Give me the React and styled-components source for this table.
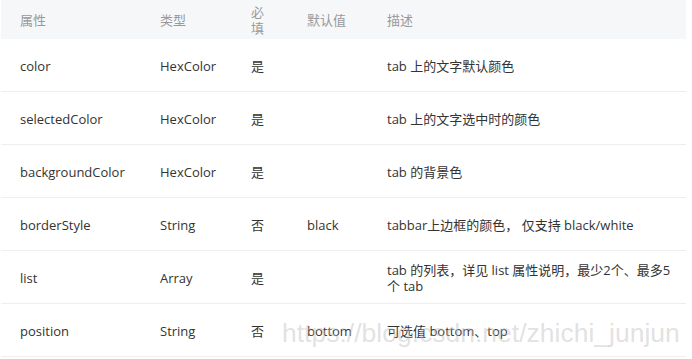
import styled, { createGlobalStyle } from "styled-components";

const Global = createGlobalStyle`
  body {
    margin: 0;
    background: #fff;
    font-family: "Open Sans", "Noto Sans CJK SC", sans-serif;
  }
`;

const Page = styled.div`
  position: relative;
  width: 692px;
  height: 359px;
  overflow: hidden;
  background: #fff;
`;

const Table = styled.div`
  width: 685px;
  margin-left: 1px;
  font-size: 13px;
  color: #333;
`;

const Row = styled.div`
  display: grid;
  grid-template-columns: 140px 91px 56px 80px 1fr;
  align-items: center;
  min-height: ${(p) => (p.head ? "39px" : "52px")};
  background: ${(p) => (p.head ? "#f6f7f9" : "#fff")};
  color: ${(p) => (p.head ? "#999" : "#333")};
  border-bottom: ${(p) => (p.head ? "none" : "1px solid #eceef1")};
`;

const Cell = styled.div`
  padding: 1px ${(p) => (p.wide ? "6px" : "19px")} 0 19px;
  line-height: 16px;
`;

const Watermark = styled.div`
  position: absolute;
  left: 282px;
  top: 318px;
  font-family: "Liberation Sans", Arial, sans-serif;
  font-size: 26.5px;
  color: rgba(190, 190, 190, 0.45);
  white-space: nowrap;
  pointer-events: none;
`;

const rows = [
  ["color", "HexColor", "是", "", "tab 上的文字默认颜色"],
  ["selectedColor", "HexColor", "是", "", "tab 上的文字选中时的颜色"],
  ["backgroundColor", "HexColor", "是", "", "tab 的背景色"],
  ["borderStyle", "String", "否", "black", "tabbar上边框的颜色， 仅支持 black/white"],
  ["list", "Array", "是", "", "tab 的列表，详见 list 属性说明，最少2个、最多5个 tab"],
  ["position", "String", "否", "bottom", "可选值 bottom、top"],
];

export default function App() {
  return (
    <Page>
      <Global />
      <Table>
        <Row head>
          <Cell>属性</Cell>
          <Cell>类型</Cell>
          <Cell>必填</Cell>
          <Cell>默认值</Cell>
          <Cell wide>描述</Cell>
        </Row>
        {rows.map((r) => (
          <Row key={r[0]}>
            {r.map((c, i) => (
              <Cell key={i} wide={i === 4}>
                {c}
              </Cell>
            ))}
          </Row>
        ))}
      </Table>
      <Watermark>https://blog.csdn.net/zhichi_junjun</Watermark>
    </Page>
  );
}
